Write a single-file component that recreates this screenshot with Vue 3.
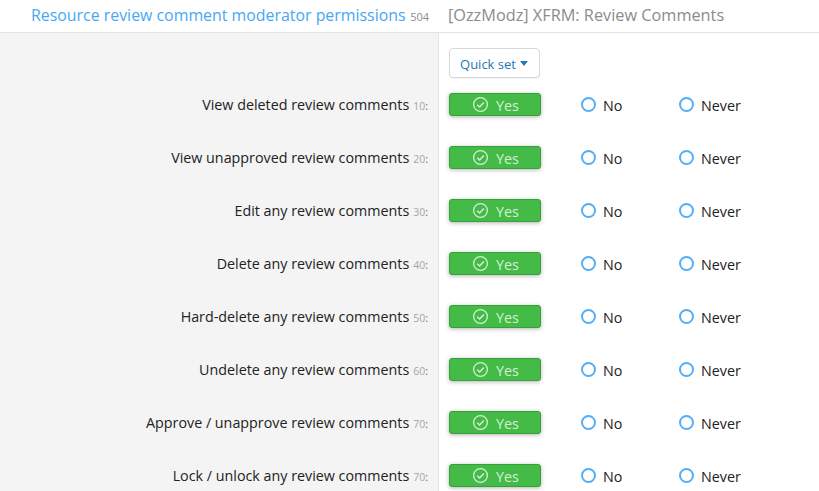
<script setup>
const rows = [
  ['View deleted review comments', '10'],
  ['View unapproved review comments', '20'],
  ['Edit any review comments', '30'],
  ['Delete any review comments', '40'],
  ['Hard-delete any review comments', '50'],
  ['Undelete any review comments', '60'],
  ['Approve / unapprove review comments', '70'],
  ['Lock / unlock any review comments', '70']
]
</script>

<template>
  <div class="page">
    <header class="head">
      <div class="head-left">
        <span class="title">Resource review comment moderator permissions</span>
        <span class="count">504</span>
      </div>
      <div class="head-right">[OzzModz] XFRM: Review Comments</div>
    </header>
    <div class="form">
      <div class="row top-row">
        <div class="label"></div>
        <div class="control">
          <button class="quick" type="button"><span class="quick-text">Quick set</span><span class="caret"></span></button>
        </div>
      </div>
      <div v-for="r in rows" :key="r[0]" class="row">
        <div class="label">
          <span class="label-text">{{ r[0] }}</span>
          <span class="code">{{ r[1] }}<span class="colon">:</span></span>
        </div>
        <div class="control">
          <div class="yes">
            <svg class="check" width="17" height="17" viewBox="0 0 17 17" fill="none">
              <circle cx="8.5" cy="8.5" r="6.9" stroke="#d3f0d4" stroke-width="1.3" />
              <path d="M5.2 8.7 7.6 11 11.9 6.4" stroke="#d3f0d4" stroke-width="1.5" />
            </svg>
            <span class="yes-text">Yes</span>
          </div>
          <div class="opt opt-no"><span class="radio"></span><span>No</span></div>
          <div class="opt opt-never"><span class="radio"></span><span>Never</span></div>
        </div>
      </div>
    </div>
  </div>
</template>

<style scoped>
.page {
  width: 819px;
  height: 491px;
  overflow: hidden;
  background: #fff;
  font-family: "Open Sans", "Noto Sans", sans-serif;
  font-size: 14.3px;
  color: #222;
}
.head {
  display: flex;
  height: 32px;
  border-bottom: 1px solid #e4e4e4;
}
.head-left {
  box-sizing: border-box;
  width: 439px;
  padding: 4px 10px 0 31px;
  display: flex;
  justify-content: space-between;
  align-items: baseline;
  white-space: nowrap;
}
.title {
  font-size: 15.9px;
  color: #47a7f5;
  line-height: 22px;
}
.count {
  font-size: 11px;
  color: #8c8c8c;
}
.head-right {
  padding: 4px 0 0 9px;
  font-size: 16.3px;
  line-height: 22px;
  color: #8c8c8c;
  white-space: nowrap;
}
.form {
  display: flex;
  flex-direction: column;
}
.row {
  display: flex;
  height: 53px;
}
.top-row {
  height: 55px;
}
.label {
  box-sizing: border-box;
  width: 439px;
  flex: none;
  background: #f4f4f4;
  border-right: 1px solid #e4e4e4;
  padding: 5px 10px 0 0;
  display: flex;
  justify-content: flex-end;
  align-items: baseline;
  white-space: nowrap;
}
.label-text {
  line-height: 24px;
  margin-right: 4px;
}
.code {
  font-size: 10.5px;
  color: #a6a6a6;
}
.colon {
  color: #666;
}
.control {
  display: flex;
  align-items: flex-start;
  padding: 5px 0 0 10px;
}
.top-row .control {
  padding-top: 15px;
}
.quick {
  box-sizing: border-box;
  width: 91px;
  height: 30px;
  padding: 0 0 0 2px;
  background: #fff;
  border: 1px solid #d8d8d8;
  border-radius: 4px;
  color: #2577b1;
  font: inherit;
  font-size: 13px;
  display: flex;
  align-items: center;
  justify-content: center;
  box-shadow: 0 1px 1px rgba(0, 0, 0, 0.05);
}
.quick-text {
  margin-left: -3px;
  padding-top: 2px;
}
.caret {
  margin-left: 4px;
  border-left: 4px solid transparent;
  border-right: 4px solid transparent;
  border-top: 5px solid #2577b1;
}
.yes {
  box-sizing: border-box;
  width: 92px;
  height: 23px;
  background: #44bb47;
  border: 1px solid #37a03a;
  border-radius: 3px;
  box-shadow: 0 1px 4px rgba(0, 0, 0, 0.3);
  color: #d3f0d4;
  display: flex;
  align-items: center;
  justify-content: center;
  gap: 7px;
}
.check {
  margin: -1px 0 0 1px;
}
.yes-text {
  padding-top: 2px;
}
.opt {
  display: flex;
  align-items: center;
  gap: 7px;
  height: 24px;
}
.opt-no {
  margin-left: 40px;
  width: 98px;
}
.radio {
  box-sizing: border-box;
  width: 15px;
  height: 15px;
  border: 2px solid #55aef5;
  border-radius: 50%;
  background: #fff;
  margin-top: -2px;
}
</style>

<style>
html, body {
  margin: 0;
  overflow: hidden;
}
</style>
